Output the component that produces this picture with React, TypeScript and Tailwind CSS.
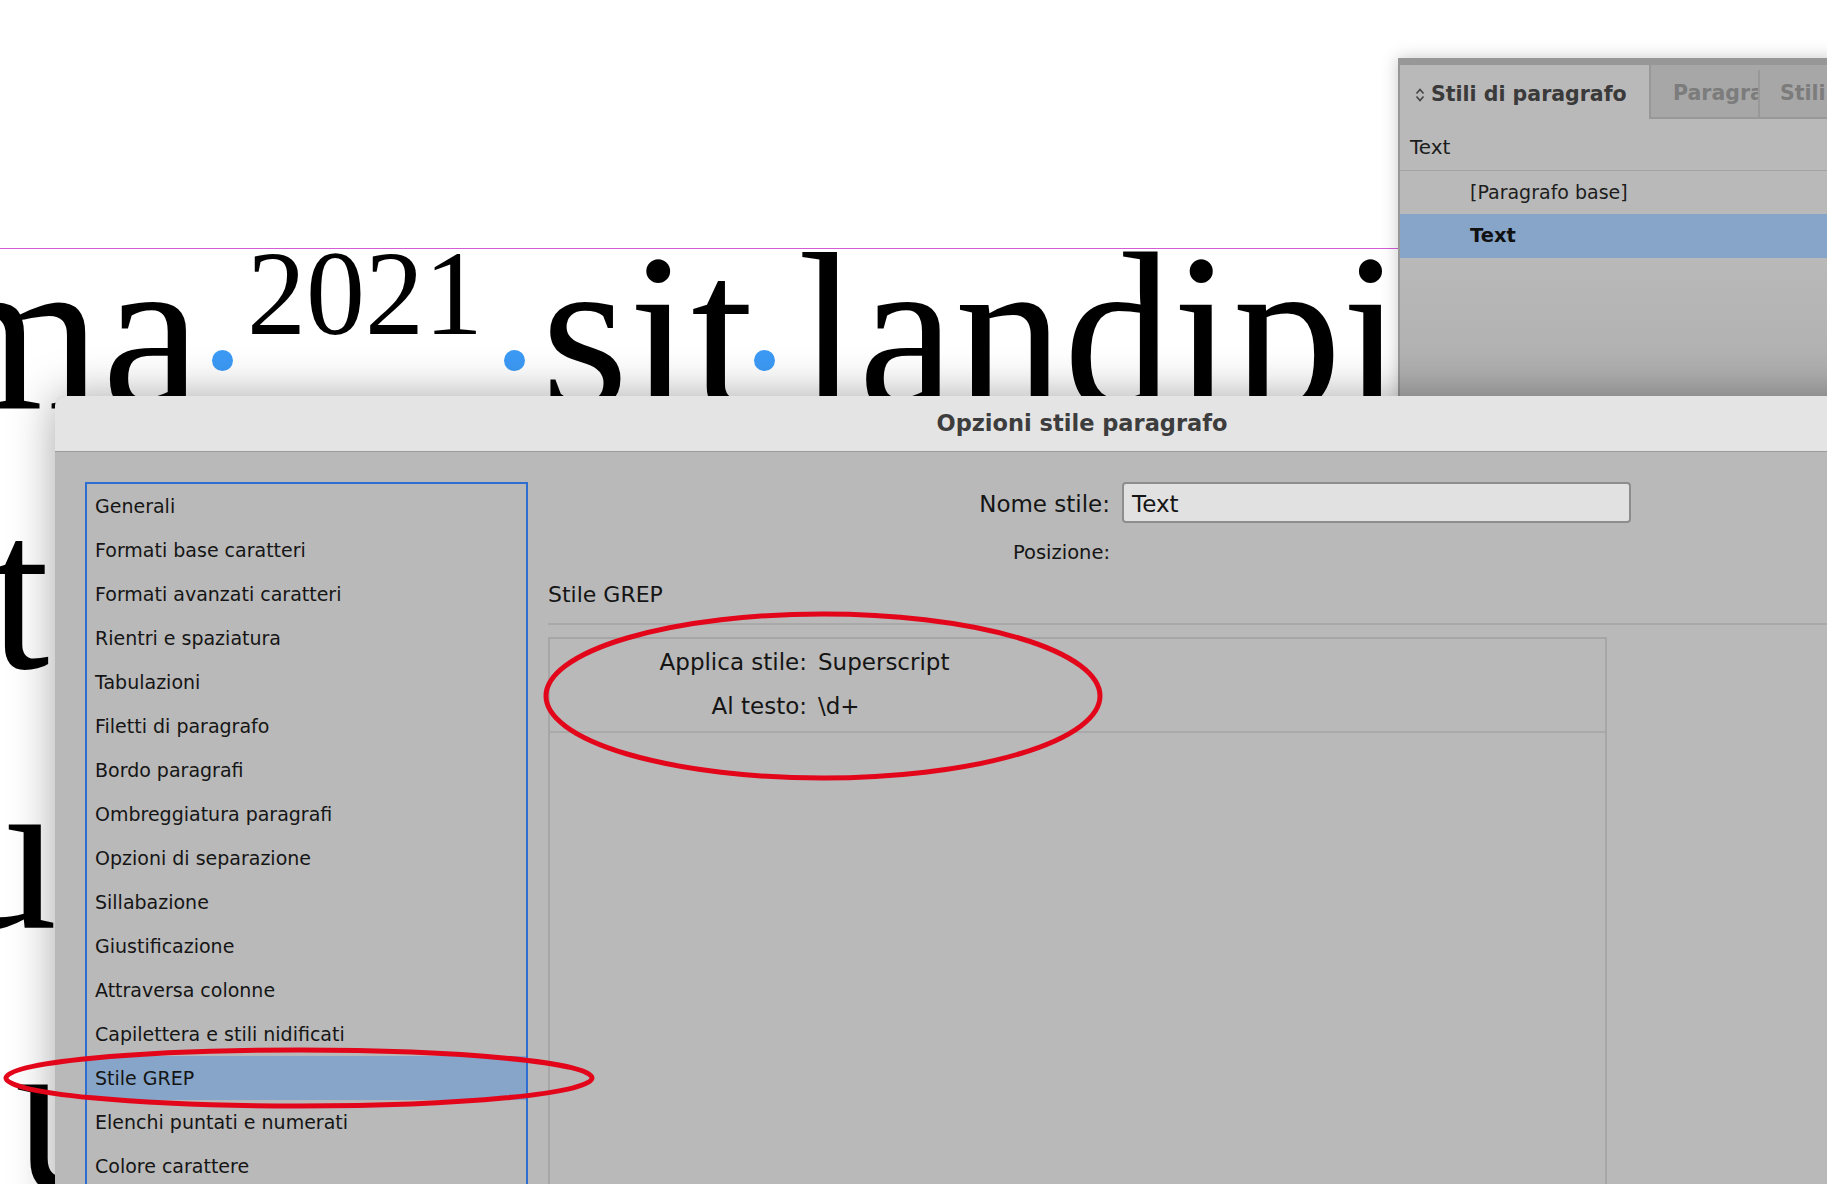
import React from "react";

const listItems = [
  "Generali",
  "Formati base caratteri",
  "Formati avanzati caratteri",
  "Rientri e spaziatura",
  "Tabulazioni",
  "Filetti di paragrafo",
  "Bordo paragrafi",
  "Ombreggiatura paragrafi",
  "Opzioni di separazione",
  "Sillabazione",
  "Giustificazione",
  "Attraversa colonne",
  "Capilettera e stili nidificati",
  "Stile GREP",
  "Elenchi puntati e numerati",
  "Colore carattere",
  "Funzioni OpenType",
];

function Dot() {
  return <div className="mt-[148px] h-[21px] w-[21px] shrink-0 rounded-full bg-[#3c9af5]" />;
}

function DocumentText() {
  return (
    <div className="relative pt-[202px] font-['Liberation_Serif',serif] text-black whitespace-nowrap">
      <div className="absolute left-0 top-[248px] h-px w-full bg-[#d45bd8]" />
      <div className="ml-[-73px] flex h-[260px] items-start">
        <div className="w-[285px] shrink-0 text-[225px] leading-[260px]">ma</div>
        <Dot />
        <div className="mt-[31px] w-[271px] shrink-0 pl-[14px] text-[121px] leading-[121px]">
          <span className="inline-block origin-left scale-x-[0.975]">2021</span>
        </div>
        <Dot />
        <div className="w-[229px] shrink-0 pl-[16px] text-[225px] leading-[260px]">sit</div>
        <Dot />
        <div className="shrink-0 pl-[23px] text-[225px] leading-[260px]">
          <span className="inline-block origin-left scale-x-[0.967]">landipi</span>
        </div>
      </div>
      <div className="ml-[-10px] h-[260px] text-[225px] leading-[260px]">
        <span className="inline-block origin-left scale-x-[0.95]">t</span>
      </div>
      <div className="ml-[-50px] h-[260px] text-[225px] leading-[260px]">
        <span className="inline-block origin-left scale-x-[0.95]">u</span>
      </div>
      <div className="ml-[15px] h-[260px] text-[225px] leading-[260px]">
        <span className="inline-block origin-left scale-x-[0.95]">u</span>
      </div>
    </div>
  );
}

function StylesPanel() {
  return (
    <div className="absolute left-[1398px] top-[58px] flex h-[360px] w-[440px] flex-col border-l-2 border-t-[7px] border-[#979797] bg-[#b9b9b9] shadow-[0_0_16px_rgba(0,0,0,0.22)]">
      <div className="flex h-[54px] shrink-0">
        <div className="flex w-[249px] items-center gap-[6px] pl-[15px] pt-[5px] text-[20.5px] font-bold text-[#3a3a3a]">
          <svg width="10" height="16" viewBox="0 0 10 16" fill="none" stroke="#444" strokeWidth="1.6">
            <polyline points="1.5,6.5 5,2.5 8.5,6.5" />
            <polyline points="1.5,9.5 5,13.5 8.5,9.5" />
          </svg>
          <span>Stili di paragrafo</span>
        </div>
        <div className="flex flex-1 border-b-2 border-l-2 border-[#989898] bg-[#a7a7a7] pt-[5px] text-[20.5px] font-bold text-[#7c7c7c]">
          <div className="flex w-[109px] items-center overflow-hidden border-r-2 border-[#989898] pl-[22px] whitespace-nowrap">
            Paragra
          </div>
          <div className="flex items-center pl-[20px]">Stili</div>
        </div>
      </div>
      <div className="flex h-[52px] shrink-0 items-center border-b border-[#a3a3a3] pl-[10px] pt-[4px] text-[20px] text-[#1c1c1c]">
        Text
      </div>
      <div className="flex h-[43px] shrink-0 items-center pl-[70px] text-[19px] text-[#1c1c1c]">
        [Paragrafo base]
      </div>
      <div className="flex h-[44px] shrink-0 items-center bg-[#86a5c8] pl-[70px] text-[19.5px] font-bold text-[#111]">
        Text
      </div>
      <div className="flex-1 bg-gradient-to-b from-[#b9b9b9] to-[#adadad]" />
    </div>
  );
}

function Dialog() {
  return (
    <div className="absolute left-[55px] top-[396px] h-[900px] w-[2054px] overflow-hidden rounded-tl-[10px] bg-[#b9b9b9] shadow-[0_0_45px_rgba(0,0,0,0.35)]">
      <div className="flex h-[56px] items-center justify-center border-b border-[#9b9b9b] bg-[#e4e4e4] text-[22.5px] font-bold text-[#3d3d3d]">
        Opzioni stile paragrafo
      </div>
      <div className="flex pl-[30px] pt-[30px]">
        <div className="h-[800px] w-[443px] shrink-0 border-2 border-[#2e6ed0]">
          {listItems.map((item) => (
            <div
              key={item}
              className={
                item === "Stile GREP"
                  ? "flex h-[44px] items-center bg-[#86a5c8] pl-[8px] text-[19px] text-[#151515]"
                  : "flex h-[44px] items-center pl-[8px] text-[19px] text-[#151515]"
              }
            >
              {item}
            </div>
          ))}
        </div>
        <div className="ml-[20px] flex flex-1 flex-col text-[#151515]">
          <div className="flex h-[41px] items-center gap-[12px]">
            <div className="w-[562px] pt-[4px] text-right text-[23px]">Nome stile:</div>
            <div className="flex h-[41px] w-[509px] items-center rounded-[4px] border-2 border-[#8d8d8d] bg-[#e1e1e1] pl-[8px] pt-[3px] text-[23px]">
              Text
            </div>
          </div>
          <div className="mt-[16px] w-[562px] text-right text-[19.5px] leading-[28px]">Posizione:</div>
          <div className="mt-[12px] text-[22px] leading-[32px]">Stile GREP</div>
          <div className="mt-[12px] h-[2px] w-full bg-[#a9a9a9]" />
          <div className="mt-[12px] h-[600px] w-[1059px] border-2 border-[#a6a6a6]">
            <div className="border-b-2 border-[#a9a9a9] pb-[3px] pt-[1px] text-[23px]">
              <div className="flex h-[44px] items-center gap-[11px]">
                <div className="w-[257px] text-right">Applica stile:</div>
                <div>Superscript</div>
              </div>
              <div className="flex h-[44px] items-center gap-[11px]">
                <div className="w-[257px] text-right">Al testo:</div>
                <div>\d+</div>
              </div>
            </div>
          </div>
        </div>
      </div>
    </div>
  );
}

export default function App() {
  return (
    <div className="relative h-[1184px] w-[1827px] overflow-hidden bg-white font-['DejaVu_Sans',sans-serif]">
      <DocumentText />
      <StylesPanel />
      <Dialog />
      <svg
        className="pointer-events-none absolute left-0 top-0"
        width="1827"
        height="1184"
        viewBox="0 0 1827 1184"
        fill="none"
      >
        <ellipse cx="823" cy="696" rx="277" ry="82" stroke="#e3061b" strokeWidth="5" />
        <ellipse cx="299" cy="1078" rx="293" ry="28" stroke="#e3061b" strokeWidth="5" />
      </svg>
    </div>
  );
}
